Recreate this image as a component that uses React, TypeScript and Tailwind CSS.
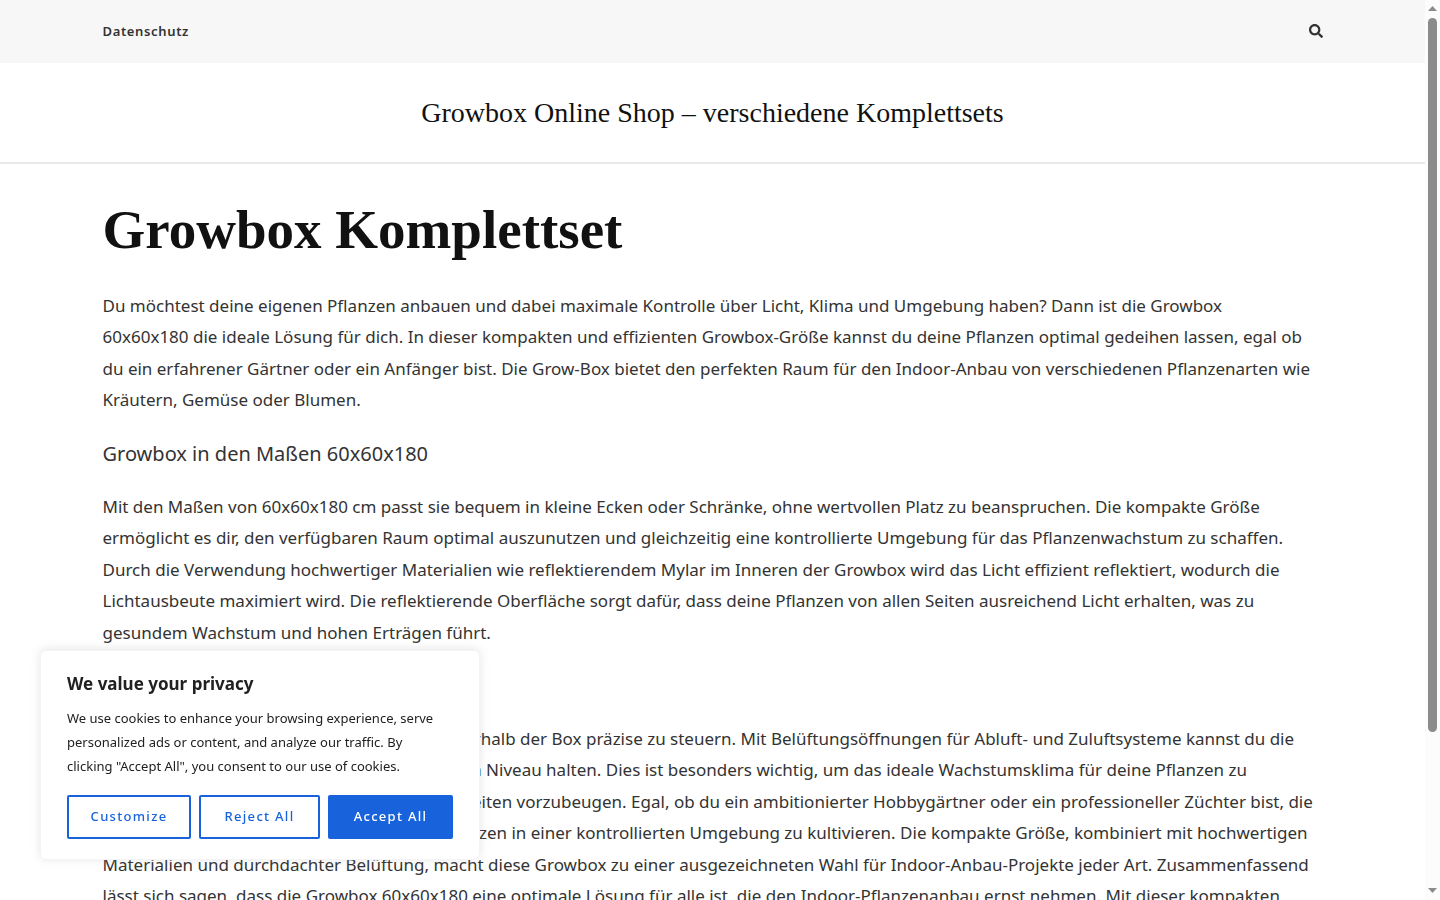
import { Fragment } from 'react';
import { FaSearch } from 'react-icons/fa';

const intro = [
  'Du möchtest deine eigenen Pflanzen anbauen und dabei maximale Kontrolle über Licht, Klima und Umgebung haben? Dann ist die Growbox',
  '60x60x180 die ideale Lösung für dich. In dieser kompakten und effizienten Growbox-Größe kannst du deine Pflanzen optimal gedeihen lassen, egal ob',
  'du ein erfahrener Gärtner oder ein Anfänger bist. Die Grow-Box bietet den perfekten Raum für den Indoor-Anbau von verschiedenen Pflanzenarten wie',
  'Kräutern, Gemüse oder Blumen.',
];

const dimensions = [
  'Mit den Maßen von 60x60x180 cm passt sie bequem in kleine Ecken oder Schränke, ohne wertvollen Platz zu beanspruchen. Die kompakte Größe',
  'ermöglicht es dir, den verfügbaren Raum optimal auszunutzen und gleichzeitig eine kontrollierte Umgebung für das Pflanzenwachstum zu schaffen.',
  'Durch die Verwendung hochwertiger Materialien wie reflektierendem Mylar im Inneren der Growbox wird das Licht effizient reflektiert, wodurch die',
  'Lichtausbeute maximiert wird. Die reflektierende Oberfläche sorgt dafür, dass deine Pflanzen von allen Seiten ausreichend Licht erhalten, was zu',
  'gesundem Wachstum und hohen Erträgen führt.',
];

const climate = [
  'Die Grow-Box ermöglicht es dir, das Klima innerhalb der Box präzise zu steuern. Mit Belüftungsöffnungen für Abluft- und Zuluftsysteme kannst du die',
  'Temperatur oder Feuchte auf einem passenden Niveau halten. Dies ist besonders wichtig, um das ideale Wachstumsklima für deine Pflanzen zu',
  'schaffen, und Schimmel sowie Pflanzenkrankheiten vorzubeugen. Egal, ob du ein ambitionierter Hobbygärtner oder ein professioneller Züchter bist, die',
  'Growbox 60x60 hilft dir so, deine eigenen Pflanzen in einer kontrollierten Umgebung zu kultivieren. Die kompakte Größe, kombiniert mit hochwertigen',
  'Materialien und durchdachter Belüftung, macht diese Growbox zu einer ausgezeichneten Wahl für Indoor-Anbau-Projekte jeder Art. Zusammenfassend',
  'lässt sich sagen, dass die Growbox 60x60x180 eine optimale Lösung für alle ist, die den Indoor-Pflanzenanbau ernst nehmen. Mit dieser kompakten',
];

const consent = [
  'We use cookies to enhance your browsing experience, serve',
  'personalized ads or content, and analyze our traffic. By',
  'clicking "Accept All", you consent to our use of cookies.',
];

const Lines = ({ lines }: { lines: string[] }) => (
  <>
    {lines.map((line, index) => (
      <Fragment key={index}>
        {index > 0 && <br />}
        {line}
      </Fragment>
    ))}
  </>
);

const Header = () => (
  <header>
    <div className="bg-[#f7f7f7]">
      <div className="mx-auto flex h-[63px] max-w-[1220px] items-center justify-between pb-px">
        <nav className="flex">
          <a href="#datenschutz" className="text-[13px] leading-5 font-semibold tracking-wider text-[#333333]">
            Datenschutz
          </a>
        </nav>
        <button type="button" aria-label="Suche" className="text-[#333333]">
          <FaSearch size={14} />
        </button>
      </div>
    </div>
    <div className="border-b-2 border-[#e8e8e8] py-7 text-center">
      <a href="#home" className="block font-['Liberation_Serif',serif] text-[28px] leading-[43px] text-[#111111]">
        Growbox Online Shop – verschiedene Komplettsets
      </a>
    </div>
  </header>
);

const Article = () => (
  <main className="mx-auto max-w-[1220px] pt-[33px] text-[17px] leading-[1.85] whitespace-nowrap text-[#333333]">
    <h1 className="mb-[27px] font-['Liberation_Serif',serif] text-[55px] leading-[66px] font-bold text-[#111111]">
      Growbox Komplettset
    </h1>
    <p><Lines lines={intro} /></p>
    <h2 className="my-[22px] text-xl leading-[31px]">Growbox in den Maßen 60x60x180</h2>
    <p><Lines lines={dimensions} /></p>
    <h2 className="my-[22px] text-xl leading-[31px]">Klima und Belüftung</h2>
    <p><Lines lines={climate} /></p>
  </main>
);

const CookieBanner = () => {
  const outline = 'h-11 rounded-xs border-2 border-[#1863dc] text-[#1863dc] tracking-widest';

  return (
    <section
      aria-label="We value your privacy"
      className="fixed bottom-10 left-10 w-[440px] rounded-md border border-[#f4f4f4] bg-white px-[26px] pt-[21px] pb-5 text-[#212121] shadow-[0_-1px_10px_0_rgba(172,171,171,0.3)]"
    >
      <h2 className="mb-2.5 text-[17px] leading-6 font-bold">We value your privacy</h2>
      <p className="mb-[17px] text-[13px] leading-6 whitespace-nowrap"><Lines lines={consent} /></p>
      <div className="flex gap-2 text-[13px] font-medium">
        <button type="button" className={`w-[124px] ${outline}`}>Customize</button>
        <button type="button" className={`w-[121px] ${outline}`}>Reject All</button>
        <button type="button" className="h-11 flex-1 rounded-xs bg-[#1863dc] tracking-widest text-white">
          Accept All
        </button>
      </div>
    </section>
  );
};

const Scrollbar = () => (
  <div aria-hidden="true" className="flex w-[15px] shrink-0 flex-col items-center justify-between bg-[#fcfcfc] pt-1.5 pb-[7px]">
    <div className="flex flex-1 flex-col items-center gap-[7px]">
      <svg width="9" height="5" viewBox="0 0 9 5" className="fill-[#8b8b8b]"><path d="M0 5 4.5 0 9 5z" /></svg>
      <div className="h-[81%] w-[9px] rounded-full bg-[#8b8b8b]" />
    </div>
    <svg width="9" height="5" viewBox="0 0 9 5" className="fill-[#8b8b8b]"><path d="M0 0h9L4.5 5z" /></svg>
  </div>
);

const App = () => (
  <div className="flex h-screen overflow-hidden bg-white font-['Noto_Sans',sans-serif]">
    <div className="min-w-0 flex-1 overflow-hidden">
      <Header />
      <Article />
    </div>
    <Scrollbar />
    <CookieBanner />
  </div>
);

export default App;
